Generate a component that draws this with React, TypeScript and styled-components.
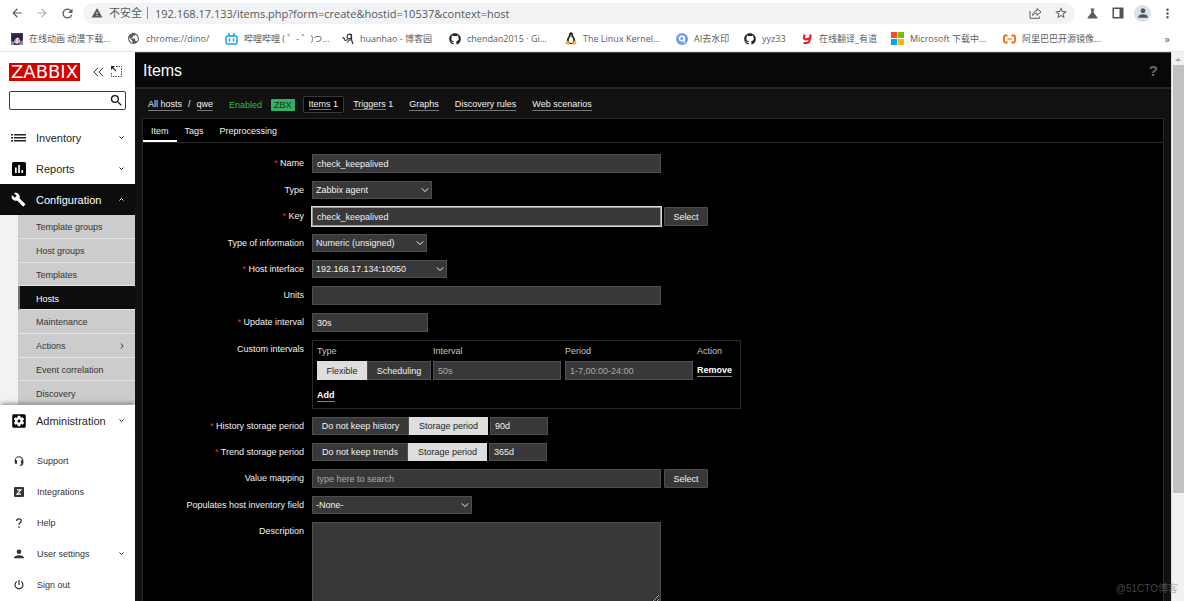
import React from "react";
import styled, { createGlobalStyle, css } from "styled-components";
import {
  MdArrowBack,
  MdArrowForward,
  MdRefresh,
  MdWarning,
  MdPublic,
  MdStarBorder,
  MdScience,
  MdPerson,
  MdMoreVert,
  MdSearch,
  MdBuild,
  MdSettingsApplications,
} from "react-icons/md";
import { FaGithub } from "react-icons/fa";

const sans = `"Liberation Sans", Arial, "Noto Sans CJK SC", sans-serif`;
const chromeSans = `"Open Sans", "Noto Sans CJK SC", sans-serif`;

const GlobalStyle = createGlobalStyle`
  *, *::before, *::after { box-sizing: border-box; }
  html, body { margin: 0; background: #fff; }
  body { font-family: ${sans}; font-size: 9px; overflow: hidden; }
  button, input, select, textarea { font-family: inherit; font-size: inherit; color: inherit; margin: 0; }
  ul { list-style: none; margin: 0; padding: 0; }
  svg { display: block; flex: none; }
`;

/* ---------- browser frame ---------- */

const Window = styled.div`
  display: flex;
  flex-direction: column;
  height: 100vh;
`;

const Chrome = styled.header`
  flex: none;
  font-family: ${chromeSans};
  color: #5a5d61;
  background: #fff;
  border-bottom: 1px solid #e4e4e4;
`;

const Toolbar = styled.div`
  display: flex;
  align-items: center;
  height: 26px;
  padding: 0 4px 0 9px;
`;

const IconButton = styled.button<{ $size?: number }>`
  display: flex;
  align-items: center;
  justify-content: center;
  flex: none;
  width: ${(p) => p.$size ?? 25}px;
  height: 17px;
  padding: 0;
  border: 0;
  background: none;
`;

const AddressBar = styled.div`
  flex: 1;
  min-width: 0;
  display: flex;
  align-items: center;
  height: 21px;
  margin: 0 5px 0 8px;
  padding: 0 2px 0 8px;
  border-radius: 11px;
  background: #f1f3f4;
  font-size: 11px;
`;

const Insecure = styled.span`
  flex: none;
  margin: 0 7px 0 6px;
  padding-right: 5px;
  border-right: 1px solid #8a8d91;
  line-height: 12px;
`;

const UrlInput = styled.input`
  flex: 1;
  min-width: 0;
  padding: 0;
  border: 0;
  outline: 0;
  background: none;
  color: #55585c;
  font-size: 11px;
`;

const Avatar = styled.span`
  display: flex;
  align-items: center;
  justify-content: center;
  width: 17px;
  height: 17px;
  border-radius: 50%;
  background: #dde1e6;
  color: #4a5568;
`;

const Bookmarks = styled.nav`
  display: flex;
  align-items: center;
  height: 25px;
  padding-left: 11px;
`;

const Bookmark = styled.a<{ $width: number }>`
  display: flex;
  align-items: center;
  gap: 6px;
  flex: none;
  width: ${(p) => p.$width}px;
  color: #5a5d61;
  text-decoration: none;
  white-space: nowrap;
  font-size: 9px;
  line-height: 14px;
`;

const MoreBookmarks = styled.button`
  margin-left: auto;
  padding: 0 14px 0 0;
  border: 0;
  background: none;
  font-size: 11px;
  line-height: 14px;
`;

/* ---------- page ---------- */

const Page = styled.div`
  flex: 1;
  min-height: 0;
  display: flex;
`;

const Sidebar = styled.aside`
  flex: none;
  width: 135px;
  background: #fff;
  color: #1f2c33;
  overflow: hidden;
`;

const SidebarHead = styled.div`
  display: flex;
  align-items: center;
  height: 39px;
  padding: 0 9px;
`;

const Logo = styled.a`
  flex: none;
  width: 71px;
  height: 18px;
  background: #d40000;
  color: #fff;
  font: 18px/18px "DejaVu Sans", sans-serif;
  text-align: center;
  text-decoration: none;
  margin-right: 10px;
`;

const SearchBox = styled.form`
  display: flex;
  align-items: center;
  height: 19px;
  margin: 0 9px 12px;
  border: 1px solid #3c3c3c;
  border-radius: 2px;
  color: #111;
`;

const SearchInput = styled.input`
  flex: 1;
  min-width: 0;
  border: 0;
  outline: 0;
  background: none;
`;

const MenuLink = styled.a<{ $active?: boolean; $raised?: boolean }>`
  display: flex;
  align-items: center;
  height: 31px;
  padding: 0 11px 0 10px;
  gap: 9px;
  font-size: 11px;
  text-decoration: none;
  color: ${(p) => (p.$active ? "#fff" : "#1f1f1f")};
  background: ${(p) => (p.$active ? "#0d0d0d" : "#fff")};
  ${(p) =>
    p.$raised &&
    css`
      position: relative;
      box-shadow: 0 -3px 4px -1px rgba(0, 0, 0, 0.35);
    `}
`;

const MenuText = styled.span`
  flex: 1;
`;

const Submenu = styled.ul`
  display: grid;
  grid-auto-rows: 1fr;
  height: 190px;
  padding-left: 18px;
  background: #f2f2f2;
`;

const SubItem = styled.li<{ $active?: boolean }>`
  display: flex;
  border-bottom: 1px solid #e6e6e6;
  border-left: 2px solid ${(p) => (p.$active ? "#777" : "#ccc")};
  background: ${(p) => (p.$active ? "#0d0d0d" : "#ccc")};
`;

const SubLink = styled.a<{ $active?: boolean }>`
  flex: 1;
  display: flex;
  align-items: center;
  justify-content: space-between;
  padding: 2px 10px 0 16px;
  color: ${(p) => (p.$active ? "#fff" : "#333")};
  text-decoration: none;
`;

const FooterMenu = styled.ul`
  padding-top: 9px;
`;

const FooterLink = styled.a`
  display: flex;
  align-items: center;
  gap: 10px;
  height: 31px;
  padding: 0 11px 0 10px;
  color: #333;
  text-decoration: none;
`;

const IconSlot = styled.span`
  flex: none;
  display: flex;
  align-items: center;
  justify-content: center;
  width: 17px;
`;

const Main = styled.main`
  flex: 1;
  min-width: 0;
  display: flex;
  flex-direction: column;
  background: #111;
  color: #f2f2f2;
  overflow: hidden;
`;

const TitleBar = styled.div`
  flex: none;
  display: flex;
  align-items: center;
  justify-content: space-between;
  height: 37px;
  padding: 1px 13px 0 8px;
  background: #080808;
  border-top: 1px solid #444;
  border-bottom: 2px solid #262626;
`;

const Title = styled.h1`
  margin: 0;
  font-size: 16px;
  line-height: 20px;
  font-weight: 400;
  color: #fff;
`;

const HelpLink = styled.a`
  color: #6b6b6b;
  font-size: 15px;
  line-height: 18px;
  font-weight: 700;
  text-decoration: none;
`;

const Breadcrumbs = styled.nav`
  flex: none;
  display: flex;
  align-items: center;
  height: 29px;
  padding: 2px 0 0 13px;
  gap: 16px;
  white-space: nowrap;
`;

const CrumbPath = styled.span`
  display: flex;
  gap: 6px;
`;

const CrumbLink = styled.a`
  color: #f2f2f2;
  text-decoration: none;
  border-bottom: 1px solid #777;
  line-height: 11px;
`;

const HostState = styled.span`
  display: flex;
  align-items: center;
  gap: 9px;
  color: #22c33c;
`;

const Badge = styled.span`
  padding: 0 3px;
  line-height: 12px;
  border-radius: 1px;
  background: #34af67;
  color: #0c3a1f;
`;

const SelectedCrumb = styled.span`
  margin: 0 -7px 0 -8px;
  padding: 2px 5px;
  border: 1px solid #383838;
  border-radius: 2px;
  background: #000;
`;

const Panel = styled.section`
  flex: 1;
  min-height: 0;
  margin: 0 7px;
  border: 1px solid #2a2a2a;
  border-bottom: 0;
  background: #000;
  overflow: hidden;
`;

const Tabs = styled.div`
  display: flex;
  height: 24px;
  border-bottom: 1px solid #2a2a2a;
`;

const Tab = styled.button<{ $active?: boolean }>`
  padding: 2px 8px 0;
  border: 0;
  border-bottom: 2px solid ${(p) => (p.$active ? "#fff" : "transparent")};
  background: none;
  color: #f2f2f2;
`;

const Form = styled.form`
  display: grid;
  gap: 8px;
  padding-top: 11px;
`;

const Row = styled.div`
  display: grid;
  grid-template-columns: 161px 1fr;
  column-gap: 8px;
`;

const labelStyle = css`
  padding-top: 4px;
  text-align: right;
  line-height: 11px;
  color: #f2f2f2;
`;

const Label = styled.label`
  ${labelStyle}
`;

const GroupLabel = styled.span`
  ${labelStyle}
`;

const Star = styled.span`
  color: #e33734;
`;

const Controls = styled.div<{ $tight?: boolean }>`
  display: flex;
  gap: ${(p) => (p.$tight ? 2 : 3)}px;
`;

const fieldStyle = css`
  border: 1px solid #4f4f4f;
  background: #383838;
  color: #f2f2f2;
  border-radius: 0;
  outline: 0;
  &::placeholder {
    color: #aaa;
    opacity: 1;
  }
`;

const Field = styled.input<{ $width: number; $low?: boolean }>`
  ${fieldStyle}
  width: ${(p) => p.$width}px;
  height: ${(p) => (p.$low ? 18 : 19)}px;
  padding: 0 4px;
`;

const FocusedField = styled(Field)`
  border-color: #999;
  box-shadow: 0 0 0 1px #d8d8d8;
`;

const TextArea = styled.textarea`
  ${fieldStyle}
  width: 349px;
  height: 81px;
  padding: 4px;
`;

const SelectWrap = styled.span<{ $width: number }>`
  display: grid;
  align-items: center;
  width: ${(p) => p.$width}px;
  height: 18px;
  & > * {
    grid-area: 1 / 1;
  }
  & > svg {
    justify-self: end;
    margin-right: 3px;
    pointer-events: none;
  }
`;

const NativeSelect = styled.select`
  ${fieldStyle}
  appearance: none;
  width: 100%;
  height: 100%;
  padding: 0 3px;
`;

const DarkButton = styled.button`
  width: 44px;
  height: 19px;
  padding: 0;
  border: 1px solid #4f4f4f;
  border-radius: 1px;
  background: #383838;
  color: #f2f2f2;
`;

const Segments = styled.div`
  display: flex;
`;

const Segment = styled.label<{ $width: number; $low?: boolean }>`
  display: flex;
  align-items: center;
  justify-content: center;
  width: ${(p) => p.$width}px;
  height: ${(p) => (p.$low ? 18 : 19)}px;
  border: 1px solid #4f4f4f;
  background: #383838;
  color: #f2f2f2;
  white-space: nowrap;
  &:has(input:checked) {
    background: #dedede;
    border-color: #dedede;
    color: #1f1f1f;
  }
`;

const HiddenRadio = styled.input`
  appearance: none;
  width: 0;
  height: 0;
`;

const IntervalBox = styled.div`
  width: 429px;
  height: 69px;
  padding: 5px 4px 0;
  border: 1px solid #2a2a2a;
`;

const IntervalTable = styled.table`
  table-layout: fixed;
  width: 100%;
  border-collapse: collapse;
  th,
  td {
    padding: 0;
    text-align: left;
    font-weight: 400;
    vertical-align: middle;
  }
  th {
    height: 15px;
    padding-bottom: 4px;
    color: #c4c4c4;
    line-height: 11px;
  }
`;

const Col = styled.col<{ $width?: number }>`
  width: ${(p) => (p.$width ? `${p.$width}px` : "auto")};
`;

const ActionLink = styled.button`
  padding: 0;
  border: 0;
  border-bottom: 1px solid #888;
  background: none;
  color: #fff;
  font-weight: 700;
  line-height: 11px;
`;

const AddRow = styled.div`
  padding-top: 10px;
`;

const Scrollbar = styled.div`
  flex: none;
  display: flex;
  flex-direction: column;
  align-items: center;
  width: 13px;
  background: #f1f1f1;
  border-left: 1px solid #dcdcdc;
`;

const ScrollThumb = styled.div`
  width: 11px;
  height: 78%;
  margin-bottom: auto;
  background: #c1c1c1;
`;

const Watermark = styled.div`
  position: absolute;
  right: 6px;
  bottom: 5px;
  font-size: 10px;
  line-height: 14px;
  color: rgba(130, 130, 130, 0.55);
`;

/* ---------- drawings ---------- */

const Chevron = ({ d, size = 6, width = 1.2 }: { d: string; size?: number; width?: number }) => (
  <svg width={size} height={size} viewBox="0 0 10 10" fill="none" stroke="currentColor" strokeWidth={width * (10 / size)}>
    <path d={d} />
  </svg>
);
const down = "M1 3l4 4 4-4";
const up = "M1 7l4-4 4 4";
const right = "M3 1l4 4-4 4";

const AnimeIcon = () => (
  <svg width="12" height="12" viewBox="0 0 12 12">
    <rect width="12" height="12" fill="#3a3960" />
    <path d="M3 5l3-2 3 3v3l-3 2-3-2z" fill="#e8cfc8" />
    <path d="M2 1l4 1 4-1 1 5-2 1-2-3-3 2-1 3-2-3z" fill="#24233f" />
    <path d="M0 8l3 1v3H0zM9 9l3-2v5H8z" fill="#8a88b4" />
    <path d="M4 6.500h1v1H4zM7 6.500h1v1H7z" fill="#5a4a90" />
  </svg>
);

const BilibiliIcon = () => (
  <svg width="13" height="12" viewBox="0 0 13 12" fill="none" stroke="#16a7df" strokeWidth="1.500">
    <rect x="1" y="3" width="11" height="8" rx="1.500" />
    <path d="M3.500.500L5 2.800M9.500.500L8 2.800M4.500 6v2M8.500 6v2" strokeLinecap="round" />
  </svg>
);

const SignatureIcon = () => (
  <svg width="12" height="12" viewBox="0 0 12 12" fill="none" stroke="#333" strokeWidth="1.200">
    <path d="M.500 5C1.500 4.200 2 4.800 2.200 6c.3 2 2.300 2 3.300 0" />
    <ellipse cx="7.300" cy="3.500" rx="2.200" ry="2.400" />
    <path d="M9.500 1v4.500c0 2 .8 3.500 1.500 5.500M9.500 6.500C7.500 7 5.500 8 5.500 9.500" />
  </svg>
);

const TuxIcon = () => (
  <svg width="12" height="13" viewBox="0 0 12 13">
    <path d="M6 .3c-1.500 0-2 1-1.900 2.500 0 1.400-2 3-2.300 5.200-.2 2 1 4 4.200 4s4.400-2 4.200-4C9.900 5.800 7.900 4.200 7.900 2.800 8 1.300 7.500.3 6 .3z" fill="#222" />
    <path d="M6 4.300c1 0 2.300 2.500 2.300 4.500S7.300 11 6 11s-2.300-.4-2.300-2.200S5 4.300 6 4.300z" fill="#fff" />
    <path d="M5 3.200l1-.6 1 .6-1 .9zM.500 10.200l2-1.700 2.400 3-.8 1.200L.8 12zM11.500 10.200l-2-1.700-2.400 3 .8 1.200 3.300-.7z" fill="#f5b912" />
  </svg>
);

const WatermarkAppIcon = () => (
  <svg width="12" height="12" viewBox="0 0 12 12" fill="none">
    <circle cx="6" cy="6" r="6" fill="#6b9ef5" />
    <circle cx="5.800" cy="5.500" r="2.300" stroke="#fff" strokeWidth="1.400" />
    <path d="M8.200 3V10" stroke="#fff" strokeWidth="1.300" />
  </svg>
);

const YoudaoIcon = () => (
  <svg width="11" height="12" viewBox="0 0 11 12" fill="none" stroke="#e3202b" strokeWidth="2.200">
    <path d="M2.500 1.500L2 5c0 1.800 3.500 1.800 5 0M8.800 1.500L7.500 7.500C7 9.800 4.500 10.500 1.500 9.800" />
  </svg>
);

const MicrosoftIcon = () => (
  <svg width="13" height="13" viewBox="0 0 13 13">
    <path d="M0 0h6v6H0z" fill="#f25022" />
    <path d="M7 0h6v6H7z" fill="#7fba00" />
    <path d="M0 7h6v6H0z" fill="#00a4ef" />
    <path d="M7 7h6v6H7z" fill="#ffb900" />
  </svg>
);

const AliIcon = () => (
  <svg width="13" height="10" viewBox="0 0 13 10" fill="none" stroke="#ff6a00" strokeWidth="1.800">
    <path d="M4.500 1.500h-2C1.500 1.500 1 2.200 1 3v4c0 .8.500 1.500 1.500 1.500h2M8.500 1.500h2c1 0 1.500.7 1.500 1.500v4c0 .8-.5 1.500-1.500 1.500h-2" />
    <path d="M4.500 5h4" strokeWidth="1.200" />
  </svg>
);

const ShareIcon = () => (
  <svg width="13" height="12" viewBox="0 0 13 12" fill="none" stroke="#5a5d61" strokeWidth="1">
    <path d="M1 4v7.300h9.500V9.500" />
    <path d="M3.500 8.500C4 5.500 5.500 4 8 3.800V1.500L12 5 8 8.300V6.200c-2 0-3.300.7-4.500 2.300z" strokeLinejoin="round" />
  </svg>
);

const PanelIcon = () => (
  <svg width="12" height="12" viewBox="0 0 12 12">
    <path d="M.500.500h11v11H.500zM2 2v8h5.500V2z" fill="#505357" fillRule="evenodd" />
  </svg>
);

const CollapseIcon = () => (
  <svg width="11" height="10" viewBox="0 0 11 10" fill="none" stroke="#333" strokeWidth="1">
    <path d="M5 .8L1 5l4 4.200M10 .8L6 5l4 4.200" />
  </svg>
);

const KioskIcon = () => (
  <svg width="11" height="11" viewBox="0 0 11 11" fill="none" stroke="#333">
    <path d="M5 .500h5.500v10H.500V6" strokeDasharray="1.500 1" strokeWidth=".9" />
    <path d="M5 5L1 1" strokeWidth="1.300" />
    <path d="M0 0h4L0 4z" fill="#222" stroke="none" />
  </svg>
);

const ListIcon = () => (
  <svg width="15" height="8" viewBox="0 0 15 8" fill="#222">
    <path d="M0 0h2v1.500H0zM3 0h12v1.500H3zM0 3h2v1.500H0zM3 3h12v1.500H3zM0 6h2v1.500H0zM3 6h12v1.500H3z" />
  </svg>
);

const ReportsIcon = () => (
  <svg width="14" height="14" viewBox="0 0 14 14">
    <rect width="14" height="14" rx="1.500" fill="#050505" />
    <path d="M3 5.500h1.700V11H3zM6.200 3h1.700v8H6.200zM9.400 8h1.700v3H9.400z" fill="#fff" />
  </svg>
);

const SupportIcon = () => (
  <svg width="10" height="10" viewBox="0 0 10 10" fill="none" stroke="#333" strokeWidth="1.100">
    <path d="M1.200 6V4.500a3.800 3.800 0 0 1 7.600 0V7c0 1.500-1 2.300-3 2.300" />
    <path d="M1.500 4.800h1v2.400h-1zM7.500 4.800h1v2.400h-1z" fill="#333" />
  </svg>
);

const IntegrationsIcon = () => (
  <svg width="10" height="10" viewBox="0 0 10 10">
    <rect width="10" height="10" rx="1" fill="#333" />
    <path d="M3 2.800h4L3 7.200h4" fill="none" stroke="#fff" strokeWidth="1.200" />
  </svg>
);

const HelpIcon = () => (
  <svg width="8" height="10" viewBox="0 0 8 10" fill="none" stroke="#333" strokeWidth="1.300">
    <path d="M1.700 3C1.700 1.500 2.700.8 4 .8s2.300.8 2.300 2C6.300 4.500 4 4.600 4 6.800" />
    <path d="M3.300 8.200h1.400v1.500H3.300z" fill="#333" stroke="none" />
  </svg>
);

const UserIcon = () => (
  <svg width="10" height="10" viewBox="0 0 10 10" fill="#333">
    <circle cx="5" cy="2.800" r="2.300" />
    <path d="M0 9.200C0 7 3 6.200 5 6.200S10 7 10 9.200z" />
  </svg>
);

const PowerIcon = () => (
  <svg width="10" height="10" viewBox="0 0 10 10" fill="none" stroke="#333" strokeWidth="1.200">
    <path d="M5 0v5M2.800 1.500a4 4 0 1 0 4.400 0" />
  </svg>
);

const ScrollUpIcon = () => (
  <svg width="12" height="13" viewBox="0 0 12 13" fill="#a0a0a0">
    <path d="M3 9h6L6 6z" />
  </svg>
);

/* ---------- data ---------- */

const bookmarks: { text: string; width: number; icon: React.ReactNode }[] = [
  { text: "在线动画 动漫下载...", width: 116, icon: <AnimeIcon /> },
  { text: "chrome://dino/", width: 98, icon: <MdPublic size={13} /> },
  { text: "哔哩哔哩 ( ゜- ゜)つ...", width: 117, icon: <BilibiliIcon /> },
  { text: "huanhao - 博客园", width: 107, icon: <SignatureIcon /> },
  { text: "chendao2015 · Gi...", width: 116, icon: <FaGithub size={12} color="#222" /> },
  { text: "The Linux Kernel...", width: 111, icon: <TuxIcon /> },
  { text: "AI去水印", width: 68, icon: <WatermarkAppIcon /> },
  { text: "yyz33", width: 58, icon: <FaGithub size={12} color="#222" /> },
  { text: "在线翻译_有道", width: 89, icon: <YoudaoIcon /> },
  { text: "Microsoft 下载中...", width: 112, icon: <MicrosoftIcon /> },
  { text: "阿里巴巴开源镜像...", width: 110, icon: <AliIcon /> },
];

const subItems = [
  "Template groups",
  "Host groups",
  "Templates",
  "Hosts",
  "Maintenance",
  "Actions",
  "Event correlation",
  "Discovery",
];

const footerItems: { text: string; icon: React.ReactNode; more?: boolean }[] = [
  { text: "Support", icon: <SupportIcon /> },
  { text: "Integrations", icon: <IntegrationsIcon /> },
  { text: "Help", icon: <HelpIcon /> },
  { text: "User settings", icon: <UserIcon />, more: true },
  { text: "Sign out", icon: <PowerIcon /> },
];

/* ---------- parts ---------- */

type RowProps = { id: string; label: string; required?: boolean; group?: boolean; children: React.ReactNode };

const FormRow = ({ id, label, required, group, children }: RowProps) => {
  const text = (
    <>
      {required && <Star>* </Star>}
      {label}
    </>
  );
  return (
    <Row>
      {group ? <GroupLabel id={`${id}-label`}>{text}</GroupLabel> : <Label htmlFor={id}>{text}</Label>}
      <Controls $tight={group} role={group ? "group" : undefined} aria-labelledby={group ? `${id}-label` : undefined}>
        {children}
      </Controls>
    </Row>
  );
};

const Select = ({ id, value, width }: { id: string; value: string; width: number }) => (
  <SelectWrap $width={width}>
    <NativeSelect id={id} defaultValue={value}>
      <option>{value}</option>
    </NativeSelect>
    <Chevron d={down} size={8} width={1} />
  </SelectWrap>
);

type Option = { text: string; width: number };

const RadioSegments = ({ name, options, selected, low }: { name: string; options: Option[]; selected: number; low?: boolean }) => (
  <Segments>
    {options.map((o, i) => (
      <Segment key={o.text} $width={o.width} $low={low}>
        <HiddenRadio type="radio" name={name} defaultChecked={i === selected} />
        {o.text}
      </Segment>
    ))}
  </Segments>
);

const BrowserChrome = () => (
  <Chrome>
    <Toolbar>
      <IconButton $size={16} aria-label="Back"><MdArrowBack size={14} /></IconButton>
      <IconButton $size={34} aria-label="Forward"><MdArrowForward size={14} color="#b4b6b9" /></IconButton>
      <IconButton $size={16} aria-label="Reload"><MdRefresh size={15} /></IconButton>
      <AddressBar>
        <MdWarning size={12} />
        <Insecure>不安全</Insecure>
        <UrlInput
          aria-label="Address"
          defaultValue="192.168.17.133/items.php?form=create&hostid=10537&context=host"
        />
        <IconButton aria-label="Share"><ShareIcon /></IconButton>
        <IconButton aria-label="Bookmark"><MdStarBorder size={14} /></IconButton>
      </AddressBar>
      <IconButton aria-label="Labs"><MdScience size={15} /></IconButton>
      <IconButton aria-label="Side panel"><PanelIcon /></IconButton>
      <IconButton aria-label="Profile"><Avatar><MdPerson size={14} /></Avatar></IconButton>
      <IconButton aria-label="Menu"><MdMoreVert size={15} /></IconButton>
    </Toolbar>
    <Bookmarks aria-label="Bookmarks">
      {bookmarks.map((b) => (
        <Bookmark key={b.text} href="#" $width={b.width}>
          {b.icon}
          {b.text}
        </Bookmark>
      ))}
      <MoreBookmarks aria-label="More bookmarks">»</MoreBookmarks>
    </Bookmarks>
  </Chrome>
);

const SideNavigation = () => (
  <Sidebar>
    <SidebarHead>
      <Logo href="#">ZABBIX</Logo>
      <IconButton $size={16} aria-label="Collapse sidebar"><CollapseIcon /></IconButton>
      <IconButton $size={20} aria-label="Kiosk mode"><KioskIcon /></IconButton>
    </SidebarHead>
    <SearchBox role="search">
      <SearchInput aria-label="Search" />
      <IconButton $size={17} aria-label="Run search"><MdSearch size={15} /></IconButton>
    </SearchBox>
    <nav aria-label="Main">
      <MenuLink href="#"><IconSlot><ListIcon /></IconSlot><MenuText>Inventory</MenuText><Chevron d={down} size={5} width={1} /></MenuLink>
      <MenuLink href="#"><IconSlot><ReportsIcon /></IconSlot><MenuText>Reports</MenuText><Chevron d={down} size={5} width={1} /></MenuLink>
      <MenuLink href="#" $active><IconSlot><MdBuild size={15} /></IconSlot><MenuText>Configuration</MenuText><Chevron d={up} size={5} width={1} /></MenuLink>
      <Submenu>
        {subItems.map((s) => (
          <SubItem key={s} $active={s === "Hosts"}>
            <SubLink href="#" $active={s === "Hosts"}>
              {s}
              {s === "Actions" && <Chevron d={right} size={6} width={1} />}
            </SubLink>
          </SubItem>
        ))}
      </Submenu>
      <MenuLink href="#" $raised><IconSlot><MdSettingsApplications size={18} color="#050505" /></IconSlot><MenuText>Administration</MenuText><Chevron d={down} size={5} width={1} /></MenuLink>
    </nav>
    <FooterMenu>
      {footerItems.map((f) => (
        <li key={f.text}>
          <FooterLink href="#">
            <IconSlot>{f.icon}</IconSlot>
            <MenuText>{f.text}</MenuText>
            {f.more && <Chevron d={down} size={5} width={1} />}
          </FooterLink>
        </li>
      ))}
    </FooterMenu>
  </Sidebar>
);

const ItemForm = () => (
  <Form>
    <FormRow id="name" label="Name" required>
      <Field id="name" $width={349} defaultValue="check_keepalived" />
    </FormRow>
    <FormRow id="type" label="Type">
      <Select id="type" value="Zabbix agent" width={120} />
    </FormRow>
    <FormRow id="key" label="Key" required>
      <FocusedField id="key" $width={349} defaultValue="check_keepalived" />
      <DarkButton type="button">Select</DarkButton>
    </FormRow>
    <FormRow id="value-type" label="Type of information">
      <Select id="value-type" value="Numeric (unsigned)" width={115} />
    </FormRow>
    <FormRow id="interface" label="Host interface" required>
      <Select id="interface" value="192.168.17.134:10050" width={135} />
    </FormRow>
    <FormRow id="units" label="Units">
      <Field id="units" $width={349} />
    </FormRow>
    <FormRow id="delay" label="Update interval" required>
      <Field id="delay" $width={116} defaultValue="30s" />
    </FormRow>
    <FormRow id="custom" label="Custom intervals" group>
      <IntervalBox>
        <IntervalTable>
          <colgroup>
            <Col $width={116} />
            <Col $width={132} />
            <Col $width={132} />
            <Col />
          </colgroup>
          <thead>
            <tr>
              <th>Type</th>
              <th>Interval</th>
              <th>Period</th>
              <th>Action</th>
            </tr>
          </thead>
          <tbody>
            <tr>
              <td>
                <RadioSegments
                  name="interval-type"
                  selected={0}
                  options={[{ text: "Flexible", width: 50 }, { text: "Scheduling", width: 64 }]}
                />
              </td>
              <td><Field aria-label="Interval" $width={128} placeholder="50s" /></td>
              <td><Field aria-label="Period" $width={128} placeholder="1-7,00:00-24:00" /></td>
              <td><ActionLink type="button">Remove</ActionLink></td>
            </tr>
          </tbody>
        </IntervalTable>
        <AddRow><ActionLink type="button">Add</ActionLink></AddRow>
      </IntervalBox>
    </FormRow>
    <FormRow id="history" label="History storage period" required group>
      <RadioSegments
        name="history-mode"
        selected={1}
        low
        options={[{ text: "Do not keep history", width: 97 }, { text: "Storage period", width: 79 }]}
      />
      <Field aria-label="History storage period" $width={58} $low defaultValue="90d" />
    </FormRow>
    <FormRow id="trends" label="Trend storage period" required group>
      <RadioSegments
        name="trends-mode"
        selected={1}
        low
        options={[{ text: "Do not keep trends", width: 96 }, { text: "Storage period", width: 79 }]}
      />
      <Field aria-label="Trend storage period" $width={58} $low defaultValue="365d" />
    </FormRow>
    <FormRow id="valuemap" label="Value mapping">
      <Field id="valuemap" $width={349} placeholder="type here to search" />
      <DarkButton type="button">Select</DarkButton>
    </FormRow>
    <FormRow id="inventory" label="Populates host inventory field">
      <Select id="inventory" value="-None-" width={160} />
    </FormRow>
    <FormRow id="description" label="Description">
      <TextArea id="description" />
    </FormRow>
  </Form>
);

export default function App() {
  return (
    <Window>
      <GlobalStyle />
      <BrowserChrome />
      <Page>
        <SideNavigation />
        <Main>
          <TitleBar>
            <Title>Items</Title>
            <HelpLink href="#">?</HelpLink>
          </TitleBar>
          <Breadcrumbs aria-label="Host">
            <CrumbPath>
              <CrumbLink href="#">All hosts</CrumbLink>
              <span>/</span>
              <CrumbLink href="#">qwe</CrumbLink>
            </CrumbPath>
            <HostState>
              Enabled
              <Badge>ZBX</Badge>
            </HostState>
            <SelectedCrumb><CrumbLink href="#">Items</CrumbLink> 1</SelectedCrumb>
            <span><CrumbLink href="#">Triggers</CrumbLink> 1</span>
            <CrumbLink href="#">Graphs</CrumbLink>
            <CrumbLink href="#">Discovery rules</CrumbLink>
            <CrumbLink href="#">Web scenarios</CrumbLink>
          </Breadcrumbs>
          <Panel>
            <Tabs role="tablist">
              <Tab role="tab" aria-selected $active>Item</Tab>
              <Tab role="tab">Tags</Tab>
              <Tab role="tab">Preprocessing</Tab>
            </Tabs>
            <ItemForm />
          </Panel>
        </Main>
        <Scrollbar>
          <ScrollUpIcon />
          <ScrollThumb />
        </Scrollbar>
      </Page>
      <Watermark>@51CTO博客</Watermark>
    </Window>
  );
}
